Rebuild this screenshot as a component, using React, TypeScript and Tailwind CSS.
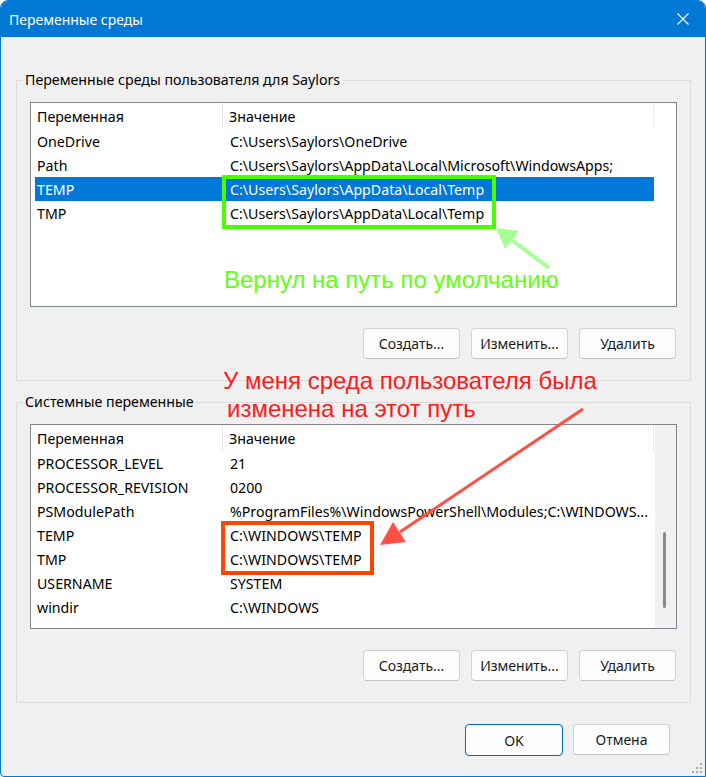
import React from "react";

type Row = { name: string; value: string; selected?: boolean };

const userVars: Row[] = [
  { name: "OneDrive", value: "C:\\Users\\Saylors\\OneDrive" },
  { name: "Path", value: "C:\\Users\\Saylors\\AppData\\Local\\Microsoft\\WindowsApps;" },
  { name: "TEMP", value: "C:\\Users\\Saylors\\AppData\\Local\\Temp", selected: true },
  { name: "TMP", value: "C:\\Users\\Saylors\\AppData\\Local\\Temp" },
];

const systemVars: Row[] = [
  { name: "PROCESSOR_LEVEL", value: "21" },
  { name: "PROCESSOR_REVISION", value: "0200" },
  { name: "PSModulePath", value: "%ProgramFiles%\\WindowsPowerShell\\Modules;C:\\WINDOWS..." },
  { name: "TEMP", value: "C:\\WINDOWS\\TEMP" },
  { name: "TMP", value: "C:\\WINDOWS\\TEMP" },
  { name: "USERNAME", value: "SYSTEM" },
  { name: "windir", value: "C:\\WINDOWS" },
];

function Btn({ children, primary }: { children: React.ReactNode; primary?: boolean }) {
  return (
    <button
      className={
        primary
          ? "h-[32px] w-[98px] rounded-[4px] border border-[#0067c0] bg-[#fdfdfd] text-[14px] text-[#1b1b1b]"
          : "h-[31px] w-[97px] rounded-[4px] border border-[#d3d3d3] border-b-[#c4c4c4] bg-[#fdfdfd] text-[14px] text-[#1b1b1b]"
      }
    >
      {children}
    </button>
  );
}

function VarList({ rows, scroll }: { rows: Row[]; scroll?: boolean }) {
  return (
    <div className="flex h-[205px] border border-[#82878f] bg-white">
      <div className="flex-1">
        {/* header */}
        <div className="flex h-[26px] items-center">
          <div className="h-full w-[192px] border-r border-[#e8e8e8] pl-[6px] pt-[1px] leading-[26px]">Переменная</div>
          <div className="h-full w-[431px] border-r border-[#e8e8e8] pl-[6px] pt-[1px] leading-[26px]">Значение</div>
        </div>
        {rows.map((r) => (
          <div
            key={r.name}
            className={`ml-[4px] flex h-[24px] w-[619px] items-center whitespace-nowrap pt-[2px] ${
              r.selected ? "bg-[#0078d7] text-white" : ""
            }`}
          >
            <div className="w-[188px] pl-[2px]">{r.name}</div>
            <div className="pl-[7px]">{r.value}</div>
          </div>
        ))}
      </div>
      {scroll && (
        <div className="flex w-[21px] flex-col bg-[#f0f0f0] pt-[107px]">
          <div className="ml-[8px] h-[76px] w-[3px] rounded-full bg-[#8a8a8a]" />
        </div>
      )}
    </div>
  );
}

function Group({ label, rows, scroll }: { label: string; rows: Row[]; scroll?: boolean }) {
  return (
    <fieldset className="border border-[#dcdcdc] px-[13px] pt-[12px] pb-[21px]">
      <legend className="ml-[-7px] px-[2px] leading-[20px]">{label}</legend>
      <VarList rows={rows} scroll={scroll} />
      <div className="mt-[21px] mr-[1px] flex justify-end gap-[11px]">
        <Btn>Создать...</Btn>
        <Btn>Изменить...</Btn>
        <Btn>Удалить</Btn>
      </div>
    </fieldset>
  );
}

export default function App() {
  return (
    <div className="relative flex h-[777px] w-[706px] flex-col overflow-hidden rounded-t-[8px] rounded-bl-[4px] border border-[#0078d4] bg-[#f0f0f0] font-['Noto_Sans',sans-serif] text-[14.2px] text-black">
      {/* title bar */}
      <div className="flex h-[36px] shrink-0 items-center justify-between bg-[#0078d4] pl-[8px] pr-[16px] text-white">
        <span className="text-[14px]">Переменные среды</span>
        <svg width="12" height="12" viewBox="0 0 12 12" stroke="white" strokeWidth="1.1">
          <path d="M0.5 0.5 L11.5 11.5 M11.5 0.5 L0.5 11.5" />
        </svg>
      </div>

      <div className="flex flex-col gap-[11px] pl-[15px] pr-[14px] pt-[33px]">
        <Group label="Переменные среды пользователя для Saylors" rows={userVars} />
        <Group label="Системные переменные" rows={systemVars} scroll />
      </div>

      <div className="mt-[21px] flex justify-end gap-[10px] pr-[35px]">
        <Btn primary>OK</Btn>
        <Btn>Отмена</Btn>
      </div>

      {/* resize grip */}
      <svg className="absolute bottom-[1px] right-[1px]" width="14" height="14" viewBox="0 0 14 14" fill="#a8a8a8">
        <rect x="10" y="2" width="2" height="2" />
        <rect x="6" y="6" width="2" height="2" />
        <rect x="10" y="6" width="2" height="2" />
        <rect x="2" y="10" width="2" height="2" />
        <rect x="6" y="10" width="2" height="2" />
        <rect x="10" y="10" width="2" height="2" />
      </svg>

      {/* annotations */}
      <div className="absolute left-[221px] top-[174px] h-[54px] w-[274px] border-[4px] border-[#47ff00]" />
      <div className="absolute left-[220px] top-[520px] h-[54px] w-[153px] border-[4px] border-[#ff4500]" />

      <div className="absolute left-[223px] top-[267px] whitespace-nowrap font-['Liberation_Sans',Arial,sans-serif] text-[24px] leading-[24px] text-[#62ff12]">
        Вернул на путь по умолчанию
      </div>
      <div className="absolute left-[222px] top-[366px] whitespace-nowrap font-['Liberation_Sans',Arial,sans-serif] text-[24px] leading-[28px] text-[#ff1a1a]">
        У меня среда пользователя была
      </div>
      <div className="absolute left-[226px] top-[394px] whitespace-nowrap font-['Liberation_Sans',Arial,sans-serif] text-[24px] leading-[28px] text-[#ff1a1a]">
        изменена на этот путь
      </div>

      <svg className="pointer-events-none absolute left-0 top-0" width="706" height="777">
        <line x1="548" y1="267" x2="511" y2="239" stroke="#a6ff94" strokeWidth="4" />
        <polygon points="495,227 518,230 504,248" fill="#a6ff94" />
        <line x1="582" y1="408" x2="399" y2="531" stroke="#ff5046" strokeWidth="3" />
        <polygon points="379,544 392,521 405,541" fill="#ff5046" />
      </svg>
    </div>
  );
}
